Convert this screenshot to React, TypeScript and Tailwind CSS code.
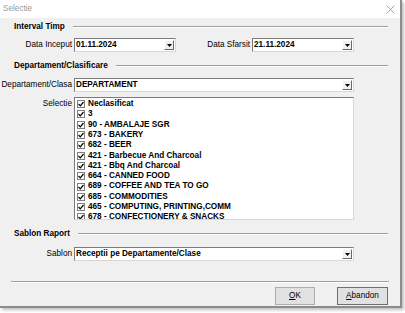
import React from "react";

const font = { fontFamily: '"Liberation Sans", Arial, sans-serif' };

function Arrow() {
  return (
    <svg width="5" height="3" viewBox="0 0 5 3">
      <path d="M0 0H5L2.5 3Z" fill="#000" />
    </svg>
  );
}

function Combo({ value, className }: { value: string; className: string }) {
  return (
    <div
      className={`h-[14px] flex items-center bg-white border border-t-[#7a7a7a] border-l-[#7a7a7a] border-r-[#d8d8d8] border-b-[#d8d8d8] ${className}`}
    >
      <span className="flex-1 pl-[1px] font-bold leading-none">{value}</span>
      <div className="w-[10px] h-[10px] mr-[1px] flex items-center justify-center bg-[#f0f0f0] border border-t-white border-l-white border-r-[#696969] border-b-[#696969]">
        <Arrow />
      </div>
    </div>
  );
}

function Group({ title }: { title: string }) {
  return (
    <div className="flex items-center h-[12px] pl-[14px] pr-[12px]">
      <span className="font-bold leading-none whitespace-nowrap">{title}</span>
      <div className="flex-1 ml-[8px] border-t border-[#a0a0a0] border-b-white border-b h-[2px]" />
    </div>
  );
}

function Check() {
  return (
    <div className="w-[8px] h-[8px] border border-[#808080] bg-white flex items-center justify-center shrink-0">
      <svg width="6" height="6" viewBox="0 0 6 6">
        <path d="M0.5 3L2.3 4.8L5.5 1" stroke="#000" strokeWidth="1.2" fill="none" />
      </svg>
    </div>
  );
}

const items = [
  "Neclasificat",
  "3",
  "90 - AMBALAJE SGR",
  "673 - BAKERY",
  "682 - BEER",
  "421 - Barbecue And Charcoal",
  "421 - Bbq And Charcoal",
  "664 - CANNED FOOD",
  "689 - COFFEE AND TEA TO GO",
  "685 - COMMODITIES",
  "465 - COMPUTING, PRINTING,COMM",
  "678 - CONFECTIONERY & SNACKS",
];

export default function App() {
  return (
    <div className="w-[405px] h-[313px] bg-white overflow-hidden text-[8.2px] text-black" style={font}>
      <div className="w-[402px] h-[308px] flex flex-col border-r-2 border-b-2 border-[#8c8c8c] shadow-[2px_2px_3px_rgba(0,0,0,0.25)]">
        {/* title bar */}
        <div className="h-[18px] bg-white flex items-center justify-between pl-[3px] pr-[5px] shrink-0">
          <span className="text-[#9a9a9a] leading-none">Selectie</span>
          <svg width="9" height="9" viewBox="0 0 9 9">
            <path d="M0.5 0.5L8.5 8.5M8.5 0.5L0.5 8.5" stroke="#9a9a9a" strokeWidth="0.9" />
          </svg>
        </div>

        <div className="flex-1 bg-[#f0f0f0] flex flex-col pt-[3px]">
          <Group title="Interval Timp" />

          <div className="flex items-center mt-[5px]">
            <span className="w-[74px] text-right pr-[2px] leading-none">Data Inceput</span>
            <Combo value="01.11.2024" className="w-[102px]" />
            <span className="ml-[29px] w-[47px] text-right pr-[2px] leading-none whitespace-nowrap">Data Sfarsit</span>
            <Combo value="21.11.2024" className="w-[102px]" />
          </div>

          <div className="mt-[8px]">
            <Group title="Departament/Clasificare" />
          </div>

          <div className="flex items-center mt-[6px]">
            <span className="w-[74px] text-right pr-[2px] leading-none whitespace-nowrap">Departament/Clasa</span>
            <Combo value="DEPARTAMENT" className="w-[280px]" />
          </div>

          <div className="flex items-start mt-[5px]">
            <span className="w-[74px] text-right pr-[2px] leading-none pt-[3px]">Selectie</span>
            <div className="w-[280px] h-[123px] bg-white border border-t-[#7a7a7a] border-l-[#7a7a7a] border-r-[#d8d8d8] border-b-[#d8d8d8] overflow-hidden pl-[2px] pt-[1px]">
              {items.map((it) => (
                <div key={it} className="flex items-center h-[10.3px] gap-[3px]">
                  <Check />
                  <span className="font-bold leading-none whitespace-nowrap">{it}</span>
                </div>
              ))}
            </div>
          </div>

          <div className="mt-[8px]">
            <Group title="Sablon Raport" />
          </div>

          <div className="flex items-center mt-[7px]">
            <span className="w-[74px] text-right pr-[2px] leading-none">Sablon</span>
            <Combo value="Receptii pe Departamente/Clase" className="w-[280px]" />
          </div>

          <div className="mx-[11px] mt-[20px] border-t border-[#a0a0a0] border-b border-b-white" />

          <div className="flex justify-end gap-[22px] pr-[12px] mt-[4px]">
            <button className="w-[40px] h-[18px] bg-[#e1e1e1] border border-[#adadad] leading-none" style={font}>
              <span className="underline">O</span>K
            </button>
            <button className="w-[51px] h-[18px] bg-[#e1e1e1] border border-[#707070] leading-none" style={font}>
              <span className="underline">A</span>bandon
            </button>
          </div>
        </div>
      </div>
    </div>
  );
}
